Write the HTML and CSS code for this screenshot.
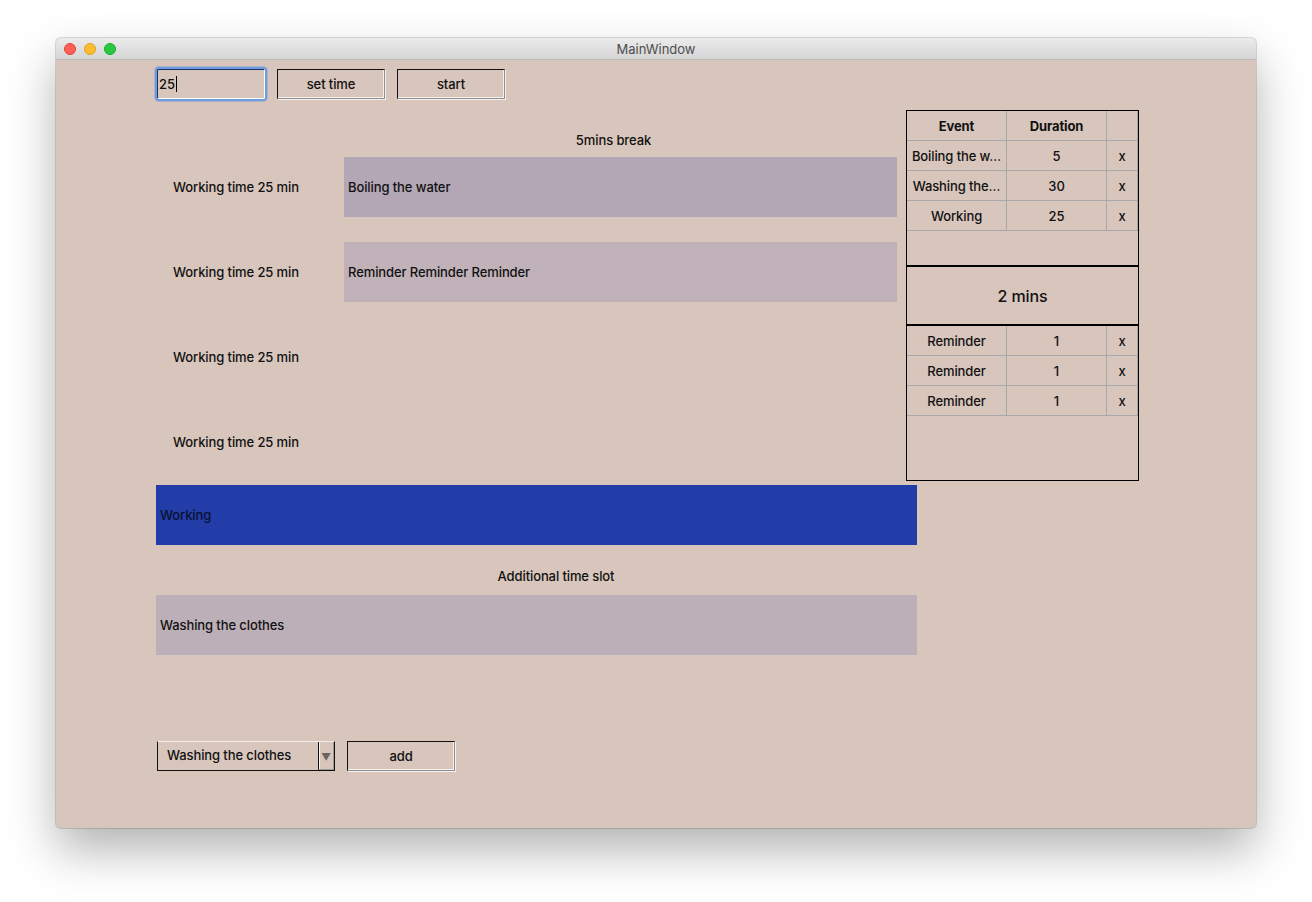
FILE: index.html
```html
<!DOCTYPE html>
<html>
<head>
<meta charset="utf-8">
<title>MainWindow</title>
<link rel="stylesheet" href="styles.css">
</head>
<body>
<div class="window">
  <div class="titlebar">
    <div class="lights">
      <span class="light red"></span>
      <span class="light yellow"></span>
      <span class="light green"></span>
    </div>
    <div class="title">MainWindow</div>
  </div>
  <div class="content">
    <div class="main">
      <div class="toolbar">
        <div class="field"><span class="value">25</span><span class="caret"></span></div>
        <div class="btn">set time</div>
        <div class="btn">start</div>
      </div>
      <div class="caption caption-break">5mins break</div>
      <div class="slot">
        <div class="slot-label">Working time 25 min</div>
        <div class="task task-a">Boiling the water</div>
      </div>
      <div class="slot">
        <div class="slot-label">Working time 25 min</div>
        <div class="task task-b">Reminder Reminder Reminder</div>
      </div>
      <div class="slot">
        <div class="slot-label">Working time 25 min</div>
      </div>
      <div class="slot">
        <div class="slot-label">Working time 25 min</div>
      </div>
      <div class="bar bar-working">Working</div>
      <div class="caption caption-extra">Additional time slot</div>
      <div class="bar bar-extra">Washing the clothes</div>
      <div class="adder">
        <div class="combo">
          <span class="combo-text">Washing the clothes</span>
          <span class="combo-arrow">▼</span>
        </div>
        <div class="btn">add</div>
      </div>
    </div>
    <div class="panel">
      <div class="section">
        <div class="grid">
          <div class="cell head">Event</div>
          <div class="cell head">Duration</div>
          <div class="cell head"></div>
          <div class="cell">Boiling the w…</div>
          <div class="cell">5</div>
          <div class="cell">x</div>
          <div class="cell">Washing the…</div>
          <div class="cell">30</div>
          <div class="cell">x</div>
          <div class="cell">Working</div>
          <div class="cell">25</div>
          <div class="cell">x</div>
        </div>
      </div>
      <div class="break-label">2 mins</div>
      <div class="section">
        <div class="grid">
          <div class="cell">Reminder</div>
          <div class="cell">1</div>
          <div class="cell">x</div>
          <div class="cell">Reminder</div>
          <div class="cell">1</div>
          <div class="cell">x</div>
          <div class="cell">Reminder</div>
          <div class="cell">1</div>
          <div class="cell">x</div>
        </div>
      </div>
    </div>
  </div>
</div>
</body>
</html>
```

FILE: styles.css
```css
html, body {
  margin: 0;
  padding: 0;
  background: #ffffff;
}

body {
  font-family: Inter, "Noto Sans", "Liberation Sans", sans-serif;
  font-size: 13px;
  letter-spacing: -0.1px;
  color: #111;
  min-height: 902px;
  padding-top: 38px;
  box-sizing: border-box;
  overflow: hidden;
}

.window {
  margin: 0 0 0 56px;
  width: 1200px;
  height: 790px;
  border-radius: 5px;
  overflow: hidden;
  background: #d8c5bc;
  box-shadow: 0 22px 48px rgba(0, 0, 0, 0.3), 0 0 0 1px rgba(0, 0, 0, 0.14);
  display: flex;
  flex-direction: column;
}

.titlebar {
  height: 22px;
  flex: none;
  box-sizing: border-box;
  background: linear-gradient(#ebebeb, #d5d5d5);
  border-bottom: 1px solid #b9b9b9;
  display: flex;
  align-items: center;
  position: relative;
}

.lights {
  display: flex;
  gap: 8px;
  padding-left: 8px;
}

.light {
  width: 12px;
  height: 12px;
  border-radius: 50%;
  box-sizing: border-box;
}
.red { background: #fe5f57; border: 0.5px solid #e0443e; }
.yellow { background: #febc2e; border: 0.5px solid #dea123; }
.green { background: #28c840; border: 0.5px solid #1aab29; }

.title {
  position: absolute;
  left: 0;
  right: 0;
  top: 1px;
  text-align: center;
  color: #4d4d4d;
  font-size: 13px;
  line-height: 21px;
  letter-spacing: 0;
}

.content {
  flex: 1;
  display: flex;
  align-items: flex-start;
  padding-left: 100px;
}

.main {
  width: 761px;
  flex: none;
  display: flex;
  flex-direction: column;
  font-weight: 500;
}

.toolbar {
  margin-top: 9px;
  padding-left: 1px;
  display: flex;
  gap: 12px;
  height: 30px;
}

.field {
  width: 108px;
  height: 30px;
  box-sizing: border-box;
  border: 1px solid;
  border-color: #18326a #ffffff #ffffff #18326a;
  box-shadow: 0 0 0 2px #6f9bdc, 0 0 0 3px rgba(111, 155, 220, 0.45);
  border-radius: 2px;
  display: flex;
  align-items: center;
  padding-left: 1px;
}

.caret {
  display: inline-block;
  width: 1px;
  height: 16px;
  background: #000;
  margin-left: 1px;
}

.btn {
  width: 108px;
  height: 30px;
  box-sizing: border-box;
  border: 1px solid;
  border-color: #111 #8e8e8e #8e8e8e #111;
  box-shadow: -1px -1px 0 #f6f1ee inset, 1px 1px 0 #f6f1ee;
  display: flex;
  align-items: center;
  justify-content: center;
}

.caption {
  height: 20px;
  line-height: 20px;
  text-align: center;
}

.caption-break {
  margin-top: 31px;
  padding-left: 154px;
}

.caption-extra {
  margin-top: 21px;
  padding-left: 39px;
}

.slot {
  height: 60px;
  display: flex;
  margin-top: 25px;
}

.caption-break + .slot {
  margin-top: 7px;
}

.slot-label {
  width: 188px;
  flex: none;
  box-sizing: border-box;
  padding-left: 17px;
  display: flex;
  align-items: center;
}

.task {
  width: 553px;
  box-sizing: border-box;
  padding-left: 4px;
  display: flex;
  align-items: center;
}

.task-a { background: #b3a7b5; }
.task-b { background: #c0b2b8; }

.bar {
  height: 60px;
  box-sizing: border-box;
  padding-left: 4px;
  display: flex;
  align-items: center;
}

.bar-working {
  margin-top: 13px;
  background: #223da8;
  color: #0b1032;
}

.bar-extra {
  margin-top: 9px;
  background: #bdafb8;
}

.adder {
  margin-top: 86px;
  padding-left: 1px;
  display: flex;
  gap: 12px;
}

.combo {
  width: 178px;
  height: 30px;
  box-sizing: border-box;
  border: 1px solid;
  border-color: #f3eeeb #111 #111 #111;
  display: flex;
  align-items: stretch;
}

.combo-text {
  flex: 1;
  padding-left: 9px;
  display: flex;
  align-items: center;
  padding-bottom: 3px;
}

.combo-arrow {
  width: 16px;
  box-sizing: border-box;
  border-left: 1px solid #111;
  border-right: 1px solid #9a9a9a;
  border-bottom: 1px solid #9a9a9a;
  box-shadow: inset 1px 0 0 #f6f1ee;
  color: #6b6560;
  font-size: 10px;
  display: flex;
  align-items: center;
  justify-content: center;
  padding-top: 3px;
}

.panel {
  margin-left: -11px;
  margin-top: 50px;
  width: 233px;
  height: 371px;
  box-sizing: border-box;
  border: 1px solid #000;
  display: flex;
  flex-direction: column;
  font-weight: 500;
}

.section {
  height: 154px;
  flex: none;
}

.grid {
  display: grid;
  grid-template-columns: 100px 100px 31px;
  grid-auto-rows: 30px;
}

.cell {
  box-sizing: border-box;
  border-right: 1px solid #a8a8a8;
  border-bottom: 1px solid #a8a8a8;
  display: flex;
  align-items: center;
  justify-content: center;
  white-space: nowrap;
  overflow: hidden;
}

.head {
  font-weight: 700;
}

.break-label {
  height: 57px;
  flex: none;
  border-top: 2px solid #000;
  border-bottom: 2px solid #000;
  display: flex;
  align-items: center;
  justify-content: center;
  font-size: 16px;
  font-weight: 500;
}
```
